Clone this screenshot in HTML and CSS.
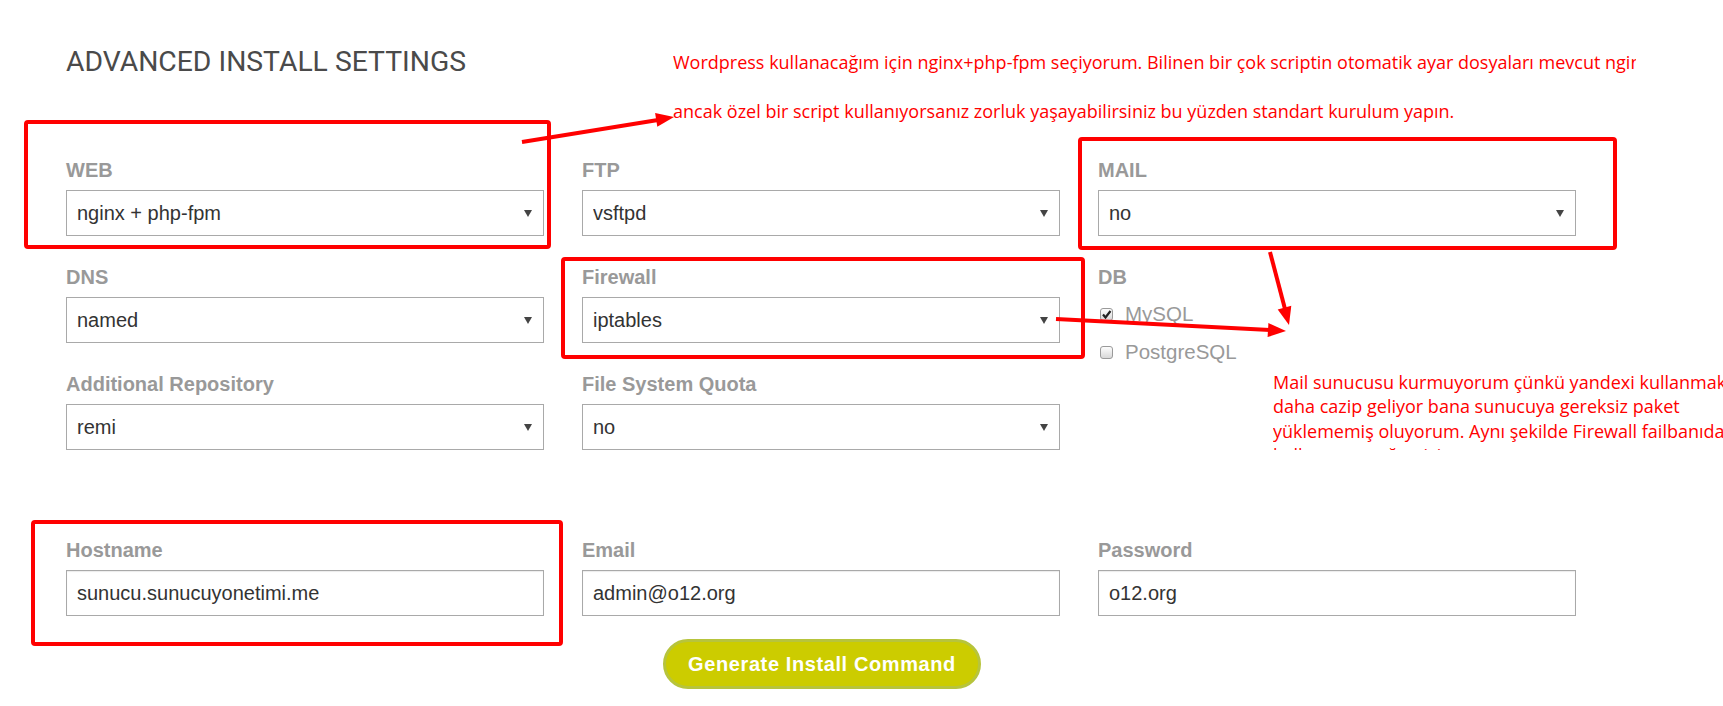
FILE: index.html
```html
<!DOCTYPE html>
<html lang="tr">
	<head>
		<meta charset="UTF-8" />
		<meta name="viewport" content="width=device-width, initial-scale=1.0" />
		<title>Advanced Install Settings</title>
		<link rel="stylesheet" href="styles.css">
	</head>
	<body>
		<div class="page">
			<h2 class="title">ADVANCED INSTALL SETTINGS</h2>

			<div class="grid options">
				<div class="field">
					<label class="field-label">WEB</label>
					<div class="select"><select><option>nginx + php-fpm</option></select></div>
				</div>
				<div class="field">
					<label class="field-label">FTP</label>
					<div class="select"><select><option>vsftpd</option></select></div>
				</div>
				<div class="field">
					<label class="field-label">MAIL</label>
					<div class="select"><select><option>no</option></select></div>
				</div>

				<div class="field">
					<label class="field-label">DNS</label>
					<div class="select"><select><option>named</option></select></div>
				</div>
				<div class="field">
					<label class="field-label">Firewall</label>
					<div class="select"><select><option>iptables</option></select></div>
				</div>
				<div class="field field-db">
					<label class="field-label">DB</label>
					<div class="check">
						<span class="box">
							<svg width="11" height="11" viewBox="0 0 11 11"><path d="M2 5.5 L4.5 8.5 L9.5 2" fill="none" stroke="#222" stroke-width="2.2"/></svg>
						</span>
						MySQL
					</div>
					<div class="check"><span class="box"></span>PostgreSQL</div>
				</div>

				<div class="field">
					<label class="field-label">Additional Repository</label>
					<div class="select"><select><option>remi</option></select></div>
				</div>
				<div class="field">
					<label class="field-label">File System Quota</label>
					<div class="select"><select><option>no</option></select></div>
				</div>
			</div>

			<div class="grid account">
				<div class="field">
					<label class="field-label">Hostname</label>
					<input class="text-input" type="text" value="sunucu.sunucuyonetimi.me">
				</div>
				<div class="field">
					<label class="field-label">Email</label>
					<input class="text-input" type="text" value="admin@o12.org">
				</div>
				<div class="field">
					<label class="field-label">Password</label>
					<input class="text-input" type="text" value="o12.org">
				</div>
			</div>

			<div class="actions">
				<button class="generate">Generate Install Command</button>
			</div>
		</div>

		<!-- annotations drawn over the form -->
		<div class="note note-web">
			Wordpress kullanacağım için nginx+php-fpm seçiyorum. Bilinen bir çok scriptin otomatik ayar dosyaları mevcut nginx için<br>
			ancak özel bir script kullanıyorsanız zorluk yaşayabilirsiniz bu yüzden standart kurulum yapın.
		</div>
		<div class="note note-mail">
			Mail sunucusu kurmuyorum çünkü yandexi kullanmak<br>
			daha cazip geliyor bana sunucuya gereksiz paket<br>
			yüklememiş oluyorum. Aynı şekilde Firewall failbanıda<br>
			kullanmayacağım için.
		</div>

		<svg class="marks" width="1723" height="706" viewBox="0 0 1723 706">
			<g fill="none" stroke="#ff0000" stroke-width="4" stroke-linejoin="round">
				<rect x="26" y="122" width="523" height="125" rx="2" />
				<rect x="1080" y="139" width="535" height="109" rx="2" />
				<rect x="563" y="259" width="520" height="98" rx="2" />
				<rect x="33" y="522" width="528" height="122" rx="2" />
				<line x1="522" y1="142" x2="658" y2="120" />
				<line x1="1270" y1="252" x2="1285" y2="309" />
				<line x1="1056" y1="319" x2="1270" y2="330" />
			</g>
			<g fill="#ff0000">
				<polygon points="674,117 657.3,126.8 655.1,113" />
				<polygon points="1289,325 1291.3,305.8 1277.7,309.4" />
				<polygon points="1286,331 1267.6,337.1 1268.4,323.1" />
			</g>
		</svg>
	</body>
</html>
```

FILE: styles.css
```css
body {
	margin: 0;
	font-family: "Liberation Sans", Arial, sans-serif;
	color: #333;
	background-color: #fff;
	overflow: hidden;
}

.page {
	padding: 45px 0 0 66px;
}

.title {
	margin: 0;
	font-family: Roboto, "Liberation Sans", sans-serif;
	font-weight: 400;
	font-size: 28.3px;
	line-height: 34px;
	color: #4a4a4a;
}

.grid {
	display: grid;
	grid-template-columns: repeat(3, 478px);
	column-gap: 38px;
	row-gap: 29px;
	align-items: start;
}

.options {
	margin-top: 79px;
}

.account {
	margin-top: 88px;
}

.field-label {
	display: block;
	font-size: 20px;
	line-height: 24px;
	font-weight: 700;
	color: #999;
	margin-bottom: 8px;
}

.select {
	position: relative;
}

.select select,
.text-input {
	display: block;
	width: 100%;
	height: 46px;
	box-sizing: border-box;
	margin: 0;
	padding: 0 10px;
	border: 1px solid #a9a9a9;
	border-radius: 0;
	background-color: #fff;
	font-family: "Liberation Sans", Arial, sans-serif;
	font-size: 20px;
	color: #333;
	outline: none;
}

.select select {
	-webkit-appearance: none;
	appearance: none;
}

.text-input {
	box-shadow: inset 0 1px 1px rgba(0, 0, 0, 0.08);
}

.select::after {
	content: "";
	position: absolute;
	right: 12px;
	top: 20px;
	border-left: 4.5px solid transparent;
	border-right: 4.5px solid transparent;
	border-top: 7px solid #444;
	pointer-events: none;
}

.field-db {
	height: 78px;
}

.field-db .field-label {
	margin-bottom: 13px;
}

.check {
	display: flex;
	align-items: center;
	gap: 12px;
	font-size: 20.5px;
	line-height: 24px;
	color: #999;
}

.check + .check {
	margin-top: 14px;
}

.box {
	display: flex;
	align-items: center;
	justify-content: center;
	width: 13px;
	height: 13px;
	box-sizing: border-box;
	margin-left: 2px;
	border: 1px solid #9a9a9a;
	border-radius: 3px;
	background: linear-gradient(#fdfdfd, #d8d8d8);
}

.actions {
	width: 1512px;
	display: flex;
	justify-content: center;
	margin-top: 23px;
}

.generate {
	height: 50px;
	padding: 0 22px;
	border: 3px solid #b7c43c;
	border-radius: 25px;
	background-color: #cccc00;
	color: #fff;
	font-family: "Liberation Sans", Arial, sans-serif;
	font-weight: 700;
	font-size: 20px;
	letter-spacing: 0.6px;
	cursor: pointer;
}

.note {
	position: absolute;
	font-family: "Open Sans", sans-serif;
	font-size: 18px;
	color: #ff0000;
	white-space: nowrap;
	overflow: hidden;
}

.note-web {
	left: 673px;
	top: 38px;
	width: 963px;
	line-height: 48.5px;
}

.note-mail {
	left: 1273px;
	top: 370px;
	width: 450px;
	height: 80px;
	line-height: 24.3px;
}

.marks {
	position: absolute;
	left: 0;
	top: 0;
	pointer-events: none;
}
```
